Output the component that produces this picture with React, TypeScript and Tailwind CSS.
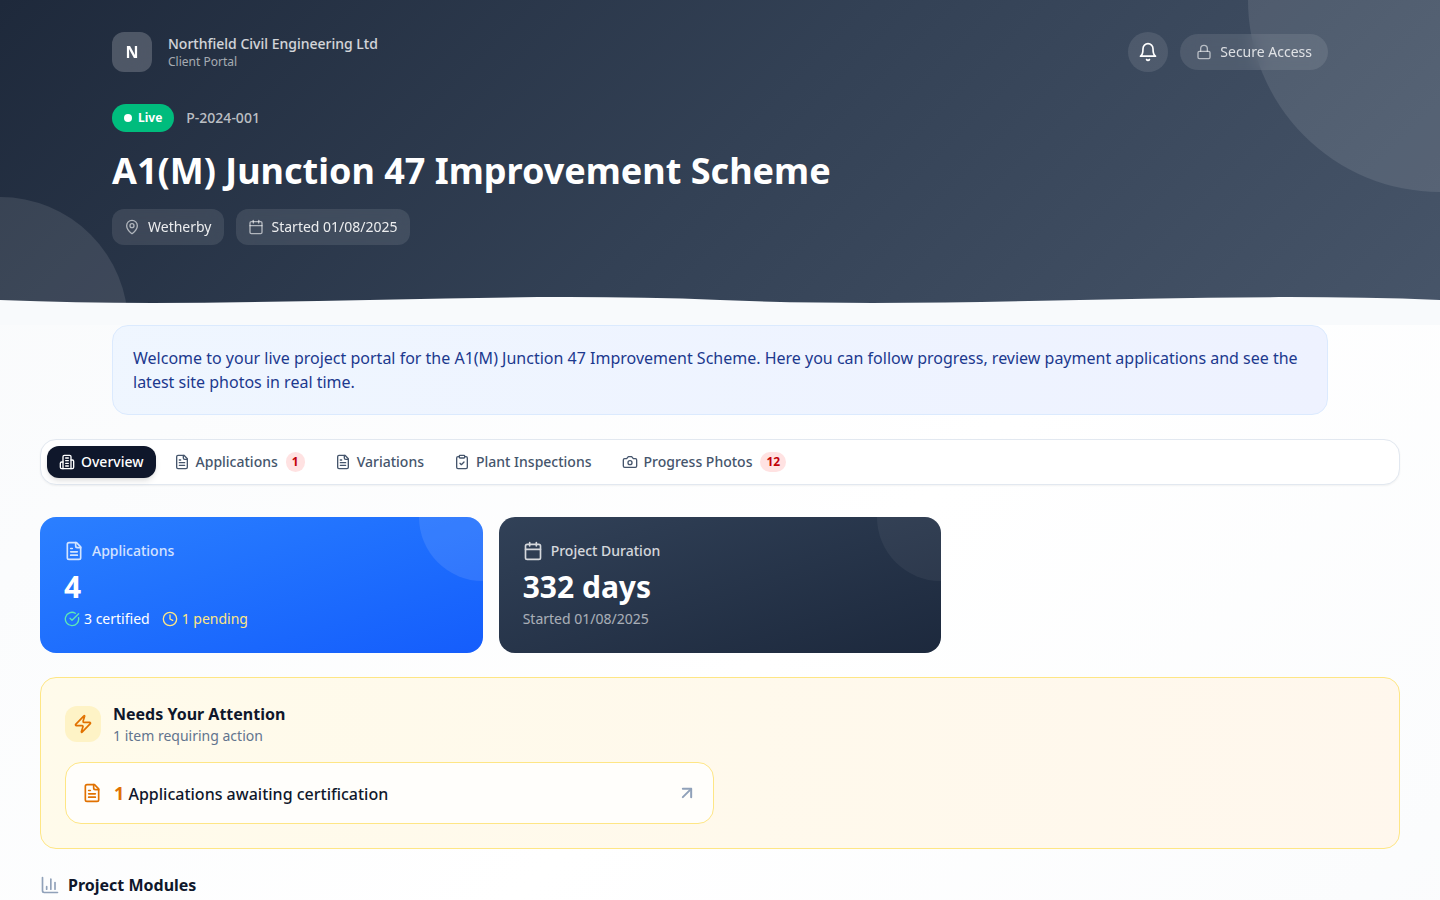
import type { ElementType, ReactNode } from "react";
import { ArrowUpRight, Calendar, ChartColumn, CircleCheckBig, ClipboardCheck, Clock, Lock, MapPin, Zap } from "lucide-react";

interface IconProps {
  className?: string;
}

function Glyph({ className, children }: IconProps & { children: ReactNode }) {
  return (
    <svg
      viewBox="0 0 24 24"
      fill="none"
      stroke="currentColor"
      strokeWidth={2}
      strokeLinecap="round"
      strokeLinejoin="round"
      className={className}
    >
      {children}
    </svg>
  );
}

function BellIcon({ className }: IconProps) {
  return (
    <Glyph className={className}>
      <path d="M6 8a6 6 0 0 1 12 0c0 7 3 9 3 9H3s3-2 3-9" />
      <path d="M10.3 21a1.94 1.94 0 0 0 3.4 0" />
    </Glyph>
  );
}

function BuildingIcon({ className }: IconProps) {
  return (
    <Glyph className={className}>
      <path d="M6 22V4a2 2 0 0 1 2-2h8a2 2 0 0 1 2 2v18Z" />
      <path d="M6 12H4a2 2 0 0 0-2 2v6a2 2 0 0 0 2 2h2" />
      <path d="M18 9h2a2 2 0 0 1 2 2v9a2 2 0 0 1-2 2h-2" />
      <path d="M10 6h4M10 10h4M10 14h4M10 18h4" />
    </Glyph>
  );
}

function FileIcon({ className }: IconProps) {
  return (
    <Glyph className={className}>
      <path d="M15 2H6a2 2 0 0 0-2 2v16a2 2 0 0 0 2 2h12a2 2 0 0 0 2-2V7Z" />
      <path d="M14 2v4a2 2 0 0 0 2 2h4" />
      <path d="M10 9H8M16 13H8M16 17H8" />
    </Glyph>
  );
}

function CameraIcon({ className }: IconProps) {
  return (
    <Glyph className={className}>
      <path d="M14.5 4h-5L7 7H4a2 2 0 0 0-2 2v9a2 2 0 0 0 2 2h16a2 2 0 0 0 2-2V9a2 2 0 0 0-2-2h-3l-2.5-3z" />
      <circle cx="12" cy="13" r="3" />
    </Glyph>
  );
}

const tabs: { label: string; icon: ElementType; count?: number }[] = [
  { label: "Overview", icon: BuildingIcon },
  { label: "Applications", icon: FileIcon, count: 1 },
  { label: "Variations", icon: FileIcon },
  { label: "Plant Inspections", icon: ClipboardCheck },
  { label: "Progress Photos", icon: CameraIcon, count: 12 },
];

function MetaPill({ icon: Icon, label }: { icon: ElementType; label: string }) {
  return (
    <div className="flex items-center gap-2 rounded-xl bg-white/10 px-3 py-2 text-sm text-white/90 backdrop-blur-sm">
      <Icon className="size-4 text-white/60" />
      <span>{label}</span>
    </div>
  );
}

function Header() {
  return (
    <header className="relative overflow-hidden bg-[linear-gradient(135deg,#1e293b_0%,#334155_50%,#475569_100%)]">
      <div className="absolute top-0 right-0 size-96 translate-x-1/2 -translate-y-1/2 rounded-full bg-white/10" />
      <div className="absolute bottom-0 left-0 size-64 -translate-x-1/2 translate-y-1/2 rounded-full bg-white/10" />

      <div className="relative mx-auto max-w-7xl px-8 pt-8 pb-20">
        <div className="mb-8 flex items-center justify-between">
          <div className="flex items-center gap-4">
            <div className="flex size-10 items-center justify-center rounded-xl bg-white/20 font-bold text-white backdrop-blur-sm">
              N
            </div>
            <div>
              <p className="text-sm font-medium text-white/80">Northfield Civil Engineering Ltd</p>
              <p className="text-xs text-white/60">Client Portal</p>
            </div>
          </div>
          <div className="flex items-center gap-3">
            <button type="button" className="flex size-10 items-center justify-center rounded-full bg-white/10 text-white">
              <BellIcon className="size-5" />
            </button>
            <div className="flex items-center gap-2 rounded-full bg-white/10 px-4 py-2 text-sm text-white/80 backdrop-blur-sm">
              <Lock className="size-4 text-white/60" />
              <span>Secure Access</span>
            </div>
          </div>
        </div>

        <div className="mb-4 flex items-center gap-3">
          <span className="flex items-center gap-1.5 rounded-full bg-emerald-500 px-3 py-1.5 text-xs font-bold text-white">
            <span className="size-2 rounded-full bg-white" />
            Live
          </span>
          <span className="text-sm font-medium text-white/70">P-2024-001</span>
        </div>

        <h1 className="mb-4 text-4xl leading-tight font-bold text-white">A1(M) Junction 47 Improvement Scheme</h1>

        <div className="flex items-center gap-3">
          <MetaPill icon={MapPin} label="Wetherby" />
          <MetaPill icon={Calendar} label="Started 01/08/2025" />
        </div>
      </div>

      <svg
        viewBox="0 0 1440 50"
        preserveAspectRatio="none"
        className="absolute bottom-0 left-0 h-[50px] w-full text-slate-50"
        fill="currentColor"
      >
        <path d="M0 25C240 35 480 15 720 25C960 35 1200 15 1440 25V50H0Z" />
      </svg>
    </header>
  );
}

function TabBar() {
  return (
    <nav className="flex gap-1.5 rounded-2xl border border-slate-200 bg-white p-1.5 shadow-xs">
      {tabs.map(({ label, icon: Icon, count }, i) => (
        <button
          key={label}
          type="button"
          className={`flex items-center gap-1.5 rounded-xl px-3 py-1.5 text-sm font-medium ${
            i === 0 ? "bg-slate-900 text-white shadow-md" : "text-slate-600"
          }`}
        >
          <Icon className="size-4" />
          {label}
          {count && (
            <span className="ml-0.5 rounded-full bg-red-100 px-1.5 py-0.5 text-xs font-bold text-red-700">{count}</span>
          )}
        </button>
      ))}
    </nav>
  );
}

function StatCard({
  icon: Icon,
  label,
  value,
  className,
  circle,
  children,
}: {
  icon: ElementType;
  label: string;
  value: string;
  className: string;
  circle: string;
  children: ReactNode;
}) {
  return (
    <div className={`relative overflow-hidden rounded-2xl bg-linear-to-br p-6 text-white ${className}`}>
      <div className={`absolute top-0 right-0 size-32 translate-x-1/2 -translate-y-1/2 rounded-full ${circle}`} />
      <div className="mb-2 flex items-center gap-2">
        <Icon className="size-5 opacity-80" />
        <span className="text-sm font-medium opacity-80">{label}</span>
      </div>
      <p className="text-3xl font-bold">{value}</p>
      <div className="mt-1 flex items-center gap-3 text-sm">{children}</div>
    </div>
  );
}

function Attention() {
  return (
    <section className="rounded-2xl border border-amber-200 bg-linear-to-r from-amber-50 to-orange-50 p-6">
      <div className="mb-4 flex items-center gap-3">
        <div className="flex size-9 items-center justify-center rounded-xl bg-amber-100">
          <Zap className="size-5 text-amber-600" />
        </div>
        <div>
          <h2 className="font-bold text-slate-900">Needs Your Attention</h2>
          <p className="text-sm text-slate-500">1 item requiring action</p>
        </div>
      </div>
      <div className="grid grid-cols-2 gap-3">
        <a className="flex items-center justify-between rounded-2xl border border-amber-200 bg-white/80 p-4">
          <div className="flex items-center gap-3">
            <FileIcon className="size-5 text-amber-600" />
            <p className="font-medium text-slate-900">
              <span className="text-lg font-bold text-amber-600">1</span> Applications awaiting certification
            </p>
          </div>
          <ArrowUpRight className="size-5 text-slate-400" strokeWidth={2.4} />
        </a>
      </div>
    </section>
  );
}

export default function App() {
  return (
    <div className="h-screen overflow-hidden font-['Noto_Sans',sans-serif]">
      <div className="min-h-[1400px] bg-linear-to-br from-slate-50 via-white to-slate-50">
        <Header />

        <div className="mx-auto max-w-7xl px-8">
          <div className="rounded-2xl border border-blue-100 bg-linear-to-r from-blue-50 to-indigo-50 p-5 text-blue-900">
            Welcome to your live project portal for the A1(M) Junction 47 Improvement Scheme. Here you can follow
            progress, review payment applications and see the latest site photos in real time.
          </div>
        </div>

        <main className="px-10 pt-6">
          <TabBar />

          <div className="mt-8 grid grid-cols-3 gap-4">
            <StatCard
              icon={FileIcon}
              label="Applications"
              value="4"
              className="from-[#2b7fff] to-[#155dfc]"
              circle="bg-white/10"
            >
              <span className="flex items-center gap-1">
                <CircleCheckBig className="size-4 text-emerald-300" />3 certified
              </span>
              <span className="flex items-center gap-1 text-amber-200">
                <Clock className="size-4" />1 pending
              </span>
            </StatCard>
            <StatCard
              icon={Calendar}
              label="Project Duration"
              value="332 days"
              className="from-slate-700 to-slate-800"
              circle="bg-white/5"
            >
              <span className="opacity-60">Started 01/08/2025</span>
            </StatCard>
          </div>

          <div className="mt-6">
            <Attention />
          </div>

          <h2 className="mt-6 flex items-center gap-2 font-bold text-slate-900">
            <ChartColumn className="size-5 text-slate-400" />
            Project Modules
          </h2>
        </main>
      </div>
    </div>
  );
}
